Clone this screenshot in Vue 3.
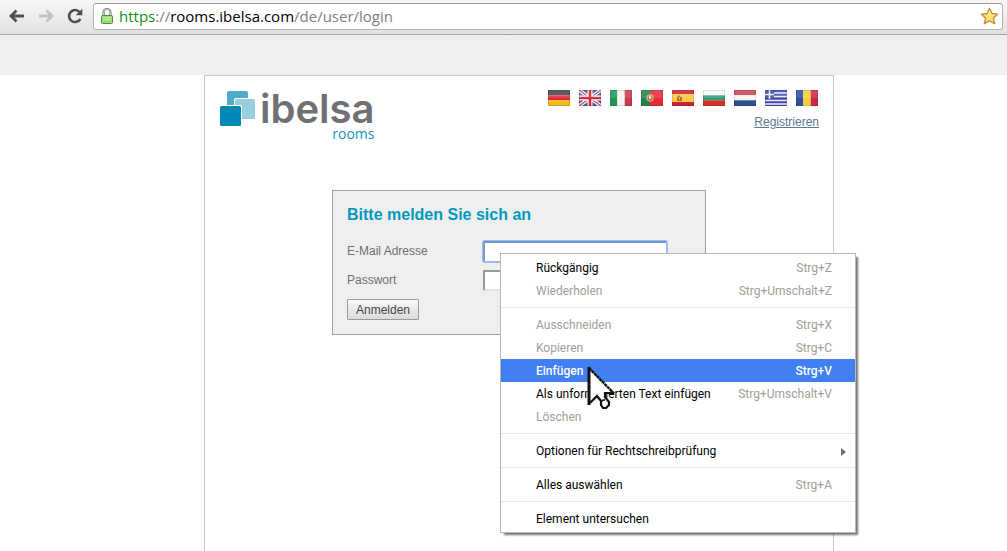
<script setup>
import { ref } from 'vue'

const email = ref('')
const password = ref('')
const url = ref('https://rooms.ibelsa.com/de/user/login')

const languages = [
  { code: 'de', name: 'Deutsch' },
  { code: 'gb', name: 'English' },
  { code: 'it', name: 'Italiano' },
  { code: 'pt', name: 'Português' },
  { code: 'es', name: 'Español' },
  { code: 'bg', name: 'Български' },
  { code: 'nl', name: 'Nederlands' },
  { code: 'gr', name: 'Ελληνικά' },
  { code: 'ro', name: 'Română' }
]

const groups = [
  [
    { label: 'Rückgängig', keys: 'Strg+Z' },
    { label: 'Wiederholen', keys: 'Strg+Umschalt+Z', disabled: true }
  ],
  [
    { label: 'Ausschneiden', keys: 'Strg+X', disabled: true },
    { label: 'Kopieren', keys: 'Strg+C', disabled: true },
    { label: 'Einfügen', keys: 'Strg+V', active: true },
    { label: 'Als unformatierten Text einfügen', keys: 'Strg+Umschalt+V' },
    { label: 'Löschen', disabled: true }
  ],
  [{ label: 'Optionen für Rechtschreibprüfung', submenu: true }],
  [{ label: 'Alles auswählen', keys: 'Strg+A' }],
  [{ label: 'Element untersuchen' }]
]
</script>

<template>
  <div class="window">
    <header class="toolbar">
      <button class="tool" type="button" aria-label="Zurück">
        <svg width="16" height="14" viewBox="0 0 16 14"><path d="M15 7H2.500M7.500 1.500 2 7l5.500 5.500" fill="none" stroke="#505050" stroke-width="2.800" /></svg>
      </button>
      <button class="tool" type="button" aria-label="Vorwärts" disabled>
        <svg width="16" height="14" viewBox="0 0 16 14"><path d="M1 7h12.500M8.500 1.500 14 7l-5.500 5.500" fill="none" stroke="#c3c3c3" stroke-width="2.800" /></svg>
      </button>
      <button class="tool" type="button" aria-label="Neu laden">
        <svg width="16" height="16" viewBox="0 0 16 16"><path d="M12.600 4.100A6 6 0 1 0 13.400 10.800" fill="none" stroke="#505050" stroke-width="2.600" /><path d="M15.300.8v6.500H8.600z" fill="#505050" /></svg>
      </button>
      <div class="address">
        <svg class="lock" width="12" height="16" viewBox="0 0 12 16">
          <path d="M2.500 8V4.500a3.500 3.500 0 0 1 7 0V8" fill="none" stroke="#777" stroke-width="2.200" />
          <path d="M2.500 8V4.500a3.500 3.500 0 0 1 7 0V8" fill="none" stroke="#ddd" stroke-width=".8" />
          <rect x=".5" y="7.500" width="11" height="8" rx="1" fill="#9bdc72" stroke="#4c9140" />
          <path d="M2 9.500h8M2 11.500h8" stroke="#c0efa0" />
        </svg>
        <a class="url" :href="url"><span class="scheme">https</span><span class="dim">://</span>rooms.ibelsa.com<span class="dim">/de/user/login</span></a>
        <button class="star" type="button" aria-label="Lesezeichen">
          <svg width="19" height="18" viewBox="0 0 19 18">
            <defs><linearGradient id="gold" x2="0" y2="1"><stop stop-color="#fff3a0" /><stop offset="1" stop-color="#fbd45c" /></linearGradient></defs>
            <path d="M9.500 1.200 12 6.500l5.800.6-4.300 4 1.200 5.700-5.200-2.900-5.200 2.900 1.200-5.700-4.300-4L7 6.500z" fill="url(#gold)" stroke="#c8893c" stroke-width="1.300" stroke-linejoin="round" />
          </svg>
        </button>
      </div>
    </header>

    <div class="band"></div>

    <main class="page">
      <div class="top">
        <div class="logo">
          <svg class="mark" width="36" height="37" viewBox="0 0 36 37">
            <rect x="7" y="0" width="21" height="21" rx="2" fill="#4eadcb" />
            <rect x="14" y="7" width="22" height="22" rx="2" fill="#fff" />
            <rect x="15" y="8" width="20" height="20" rx="1.500" fill="#98cfe0" />
            <rect x="-1" y="14" width="23" height="23" rx="2" fill="#fff" />
            <rect x="0" y="15" width="21" height="20" rx="1.500" fill="#0089b7" />
          </svg>
          <div class="wordmark">
            <span class="brand">ibelsa</span>
            <span class="product">rooms</span>
          </div>
        </div>
        <div class="side">
          <nav class="flags" aria-label="Sprache">
            <a v-for="l in languages" :key="l.code" class="flag" :href="'#' + l.code" :aria-label="l.name">
              <svg width="22" height="16" viewBox="0 0 22 16">
                <template v-if="l.code === 'de'">
                  <path fill="#444" d="M0 0h22v5.300H0z" /><path fill="#dc2830" d="M0 5.300h22v5H0z" /><path fill="#efbb1c" d="M0 10.300h22V16H0z" />
                </template>
                <template v-else-if="l.code === 'gb'">
                  <path fill="#3d59a5" d="M0 0h22v16H0z" />
                  <path stroke="#fff" stroke-width="3.600" d="m0 0 22 16M22 0 0 16" />
                  <path stroke="#d43a48" stroke-width="1.200" d="m0 0 22 16M22 0 0 16" />
                  <path stroke="#fff" stroke-width="5" d="M11 0v16M0 8h22" />
                  <path stroke="#cf2438" stroke-width="2.600" d="M11 0v16M0 8h22" />
                </template>
                <template v-else-if="l.code === 'it'">
                  <path fill="#259352" d="M0 0h7.300v16H0z" /><path fill="#f4f4f4" d="M7.300 0h7.400v16H7.300z" /><path fill="#c53c4a" d="M14.700 0H22v16h-7.300z" />
                </template>
                <template v-else-if="l.code === 'pt'">
                  <path fill="#20824a" d="M0 0h9v16H0z" /><path fill="#e62a3a" d="M9 0h13v16H9z" />
                  <circle cx="9" cy="8" r="3.200" fill="#c9604a" stroke="#c9b455" stroke-width="1.200" /><path fill="#ddd" d="M8 6h2v3H8z" />
                </template>
                <template v-else-if="l.code === 'es'">
                  <path fill="#ca2338" d="M0 0h22v16H0z" /><path fill="#f9cd40" d="M0 4h22v8H0z" />
                  <path fill="#b66a3c" d="M5 7l2-2 2 2h1v4H5z" /><path fill="#e0b090" d="M7 7h1v3H7z" />
                </template>
                <template v-else-if="l.code === 'bg'">
                  <path fill="#f8f8f8" d="M0 0h22v5.300H0z" /><path fill="#309a77" d="M0 5.300h22v5H0z" /><path fill="#cf3328" d="M0 10.300h22V16H0z" />
                </template>
                <template v-else-if="l.code === 'nl'">
                  <path fill="#c94451" d="M0 0h22v5.300H0z" /><path fill="#f5f5f5" d="M0 5.300h22v5H0z" /><path fill="#2e4f91" d="M0 10.300h22V16H0z" />
                </template>
                <template v-else-if="l.code === 'gr'">
                  <path fill="#3b49a8" d="M0 0h22v16H0z" />
                  <path stroke="#eef" stroke-width="1.500" d="M9 3h13M9 6.500h13M0 10.500h22M0 14h22M4.500 0v9M0 4.500h9" />
                </template>
                <template v-else>
                  <path fill="#2f4e9e" d="M0 0h7.300v16H0z" /><path fill="#f5ce36" d="M7.300 0h7.400v16H7.300z" /><path fill="#c92841" d="M14.700 0H22v16h-7.300z" />
                </template>
                <path fill="#fff" fill-opacity=".13" d="M0 0h22v8H0z" />
                <path fill="none" stroke="#000" stroke-opacity=".1" d="M.5.5h21v15H.5z" />
              </svg>
            </a>
          </nav>
          <a class="register" href="#register">Registrieren</a>
        </div>
      </div>

      <form class="login" @submit.prevent>
        <h1>Bitte melden Sie sich an</h1>
        <div class="row">
          <label for="email">E-Mail Adresse</label>
          <div class="field">
            <input id="email" v-model="email" class="focused" type="text" />
            <div class="menu" role="menu">
              <template v-for="(group, g) in groups" :key="g">
                <hr v-if="g" />
                <button
                  v-for="item in group"
                  :key="item.label"
                  type="button"
                  role="menuitem"
                  class="item"
                  :class="{ active: item.active }"
                  :disabled="item.disabled"
                >
                  <span>{{ item.label }}</span>
                  <span v-if="item.keys" class="keys">{{ item.keys }}</span>
                  <svg v-if="item.submenu" class="arrow" width="5" height="8" viewBox="0 0 5 8"><path d="M0 0v8l5-4z" fill="#707070" /></svg>
                </button>
              </template>
              <svg class="pointer" width="30" height="44" viewBox="0 0 30 44">
                <path d="M2 2v36l8-7 4 8 2 3h3l3-3v-3l-4-6v-2h8z" fill="#fff" />
                <path d="M2 1v38" stroke="#111" stroke-width="3" />
                <path d="m2 2 25 25.500" fill="none" stroke="#111" stroke-width="2.400" stroke-dasharray="3.200 .5" />
                <path d="M27 27h-9v4l4 5v3l-3 3h-3l-2-3v-4l-4-5-7 7" fill="none" stroke="#111" stroke-width="2.200" />
                <path d="m14 36 2-2h2" fill="none" stroke="#111" stroke-width="1.500" />
              </svg>
            </div>
          </div>
        </div>
        <div class="row">
          <label for="password">Passwort</label>
          <div class="field">
            <input id="password" v-model="password" type="password" />
          </div>
        </div>
        <button class="submit" type="submit">Anmelden</button>
      </form>
    </main>
  </div>
</template>

<style>
body {
  margin: 0;
  background: #fff;
}
</style>

<style scoped>
.window {
  display: flex;
  flex-direction: column;
  min-height: 100vh;
  overflow: hidden;
  font: 12px/16px "Liberation Sans", Arial, sans-serif;
  color: #707070;
}
button {
  font: inherit;
}
svg {
  display: block;
}
.toolbar {
  display: flex;
  align-items: center;
  box-sizing: border-box;
  height: 35px;
  padding: 0 4px 2px 2px;
  border-bottom: 1px solid #a6a6a6;
  background: linear-gradient(#f7f7f7, #e2e2e2);
}
.tool {
  display: flex;
  align-items: center;
  justify-content: center;
  width: 29px;
  height: 28px;
  padding: 0;
  border: 0;
  background: none;
}
.address {
  display: flex;
  flex: 1;
  align-items: center;
  box-sizing: border-box;
  height: 27px;
  margin-left: 4px;
  padding: 0 3px 0 7px;
  border: 1px solid #b4b4b4;
  border-top-color: #9c9c9c;
  border-radius: 3px;
  background: #fff;
}
.url {
  flex: 1;
  margin-left: 6px;
  font: 15px/22px "Open Sans", "Noto Sans", sans-serif;
  color: #000;
  text-decoration: none;
}
.scheme {
  color: #0b9310;
}
.dim {
  color: #808080;
}
.star {
  padding: 0;
  border: 0;
  background: none;
}
.band {
  height: 40px;
  background: #efefef;
}
.page {
  flex: 1;
  margin: 0 173px 0 204px;
  border: 1px solid #c8c8c8;
  border-bottom: 0;
}
.top {
  display: flex;
  justify-content: space-between;
  height: 114px;
  padding: 0 14px 0 15px;
}
.logo {
  display: flex;
  gap: 4px;
}
.mark {
  margin-top: 15px;
}
.wordmark {
  display: flex;
  flex-direction: column;
  align-items: flex-end;
  padding-top: 14px;
}
.brand {
  font: 600 40px/38px Inter, "Open Sans", sans-serif;
  color: #6f7173;
}
.product {
  font: 14px/12px "Open Sans", sans-serif;
  color: #1793b8;
}
.side {
  display: flex;
  flex-direction: column;
  align-items: flex-end;
  gap: 8px;
  padding-top: 14px;
}
.flags {
  display: flex;
  gap: 9px;
  padding-right: 1px;
}
.register {
  color: #5d7892;
}
.login {
  max-width: 344px;
  margin: 0 auto;
  padding: 14px;
  border: 1px solid #a0a0a0;
  background: #efefef;
}
h1 {
  margin: 0 0 16px;
  font-size: 16px;
  line-height: 20px;
  color: #0099bc;
}
.row {
  display: grid;
  grid-template-columns: 136px 184px;
  align-items: start;
  margin-bottom: 8px;
}
label {
  line-height: 20px;
}
.field {
  position: relative;
}
.field input {
  display: block;
  box-sizing: border-box;
  width: 100%;
  height: 21px;
  padding: 1px;
  border: 2px solid #e4e4e4;
  border-top-color: #999;
  border-left-color: #999;
  outline: 0;
  background: #fff;
}
.field input.focused {
  border-width: 2px 1px 1px 2px;
  border-color: #7795cf #98bbf5 #98bbf5 #8199c4;
  border-radius: 2px;
  box-shadow: 0 0 0 1px #98bbf5;
}
.submit {
  height: 21px;
  padding: 0 8px;
  border: 1px solid #9a9a9a;
  border-radius: 1px;
  background: linear-gradient(#f8f8f8, #dcdcdc);
  color: #444;
}
.menu {
  position: absolute;
  z-index: 1;
  top: 12px;
  left: 17px;
  box-sizing: border-box;
  width: 356px;
  padding: 2px 0;
  border: 1px solid #b8b8b8;
  background: #fff;
  box-shadow: 3px 3px 2px -1px rgba(0, 0, 0, 0.55);
  font: 12px/21px Roboto, "Open Sans", sans-serif;
}
.item {
  display: flex;
  align-items: center;
  justify-content: space-between;
  box-sizing: border-box;
  width: 100%;
  height: 23px;
  padding: 2px 23px 0 35px;
  border: 0;
  background: none;
  color: #000;
  text-align: left;
  white-space: nowrap;
}
.item:disabled,
.keys {
  color: #a0a098;
}
.item.active {
  background: #4080f3;
  color: #fff;
  font-weight: 500;
}
.item.active .keys {
  color: #fff;
}
.arrow {
  margin-right: -14px;
}
hr {
  height: 1px;
  margin: 5px 0;
  border: 0;
  background: #e6e6e6;
}
.pointer {
  position: absolute;
  top: 112px;
  left: 86px;
}
</style>
